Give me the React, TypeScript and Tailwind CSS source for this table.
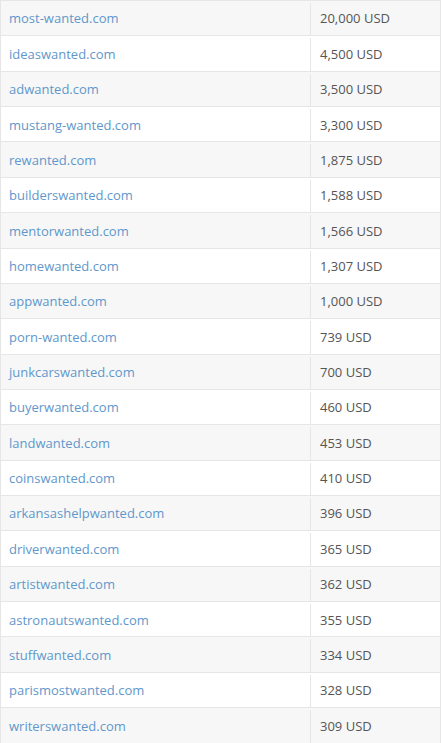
const rows: [string, string][] = [
  ["most-wanted.com", "20,000 USD"],
  ["ideaswanted.com", "4,500 USD"],
  ["adwanted.com", "3,500 USD"],
  ["mustang-wanted.com", "3,300 USD"],
  ["rewanted.com", "1,875 USD"],
  ["builderswanted.com", "1,588 USD"],
  ["mentorwanted.com", "1,566 USD"],
  ["homewanted.com", "1,307 USD"],
  ["appwanted.com", "1,000 USD"],
  ["porn-wanted.com", "739 USD"],
  ["junkcarswanted.com", "700 USD"],
  ["buyerwanted.com", "460 USD"],
  ["landwanted.com", "453 USD"],
  ["coinswanted.com", "410 USD"],
  ["arkansashelpwanted.com", "396 USD"],
  ["driverwanted.com", "365 USD"],
  ["artistwanted.com", "362 USD"],
  ["astronautswanted.com", "355 USD"],
  ["stuffwanted.com", "334 USD"],
  ["parismostwanted.com", "328 USD"],
  ["writerswanted.com", "309 USD"],
]

export default function App() {
  return (
    <div className="w-[441px] h-[743px] overflow-hidden bg-white font-['Open_Sans',sans-serif] text-[13px]">
      <div className="border-x border-t border-[#e6e6e6]">
        {rows.map(([domain, price], i) => (
          <div
            key={domain}
            className={`flex h-[35.37px] border-b border-[#e6e6e6] pt-[2px] ${i % 2 === 0 ? "bg-[#f7f7f7]" : "bg-white"}`}
          >
            <div className="flex w-[310px] items-center border-r border-[#e6e6e6] pl-[8px]">
              <a href="#" className="text-[#5f97cc]">
                {domain}
              </a>
            </div>
            <div className="flex flex-1 items-center pl-[9px] text-[#555555]">{price}</div>
          </div>
        ))}
      </div>
    </div>
  )
}
